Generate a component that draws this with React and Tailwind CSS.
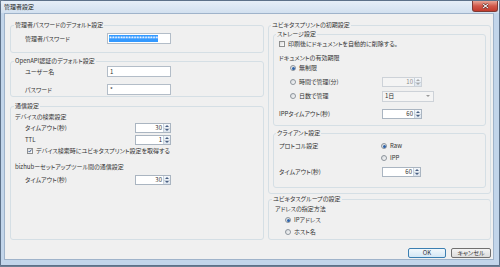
import React from 'react';

function Radio({ checked }) {
  return (
    <span className="flex h-[6px] w-[6px] shrink-0 items-center justify-center rounded-full border border-[#8d949c] bg-linear-to-br from-[#d4d8dc] to-[#fbfbfb]">
      {checked && <span className="h-[3px] w-[3px] rounded-full bg-[#2d62a8]" />}
    </span>
  );
}

function Check({ checked }) {
  return (
    <span className="flex h-[6px] w-[6px] shrink-0 items-center justify-center border border-[#8e8f8f] bg-linear-to-br from-[#dcdcdc] to-white">
      {checked && (
        <svg viewBox="0 0 6 6" className="h-[6px] w-[6px]">
          <path d="M0.8 3 L2.4 4.6 L5.2 0.8" stroke="#2b4d86" strokeWidth="1.3" fill="none" />
        </svg>
      )}
    </span>
  );
}

function Spin({ value, width, disabled }) {
  const arrow = disabled ? '#a9a9a9' : '#4a6184';
  return (
    <div
      className={`flex h-[10px] ${width} border ${
        disabled ? 'border-[#cdd2d8] bg-[#f4f4f4] text-[#8d8d8d]' : 'border-[#aab5c1] bg-white text-[#333]'
      }`}
    >
      <span className="flex-1 pr-[1px] text-right leading-[8px]">{value}</span>
      <span className="flex w-[7px] flex-col border-l border-[#c9d1da] bg-linear-to-b from-[#f4f7fa] to-[#dde5ee]">
        <span className="flex flex-1 items-center justify-center border-b border-[#c9d1da]">
          <svg viewBox="0 0 4 2" className="h-[2px] w-[4px]">
            <path d="M0 2 L2 0 L4 2Z" fill={arrow} />
          </svg>
        </span>
        <span className="flex flex-1 items-center justify-center">
          <svg viewBox="0 0 4 2" className="h-[2px] w-[4px]">
            <path d="M0 0 L2 2 L4 0Z" fill={arrow} />
          </svg>
        </span>
      </span>
    </div>
  );
}

function TextBox({ children }) {
  return (
    <div className="flex h-[11px] w-[64px] items-center border border-[#b3bdc8] bg-white pl-[2px]">
      {children}
    </div>
  );
}

export default function App() {
  return (
    <div className="h-[267px] w-[500px] bg-[#6d7f93] font-['Noto_Sans_CJK_JP',sans-serif] text-[6px] leading-[8px] text-[#333] [font-feature-settings:'palt']">
      <div className="flex h-[266px] w-[500px] flex-col rounded-t-[4px] border border-[#5d7189] bg-[#c2d5ea]">
        {/* title bar */}
        <div className="flex h-[12px] shrink-0 items-start justify-between bg-linear-to-b from-[#e6eef7] to-[#d2e0ef] pl-[3px] pr-[1px]">
          <span className="mt-[2px] text-[#222]">管理者設定</span>
          <div className="flex h-[11px] w-[26px] items-center justify-center rounded-b-[3px] border border-t-0 border-[#7e3a34] bg-linear-to-b from-[#e8a597] via-[#d0584a] to-[#c23a2c]">
            <svg viewBox="0 0 8 7" className="h-[6px] w-[7px]">
              <path d="M1 1 L7 6 M7 1 L1 6" stroke="#4a1a16" strokeWidth="2.4" />
              <path d="M1 1 L7 6 M7 1 L1 6" stroke="#fff" strokeWidth="1.3" />
            </svg>
          </div>
        </div>

        {/* client area */}
        <div className="ml-[3px] h-[247px] w-[490px] border border-[#9fb3ca] bg-[#f0f0f0] pl-[5px] pt-[7px]">
          <div className="flex gap-[4px]">
            {/* left column */}
            <div className="flex w-[254px] flex-col">
              <fieldset className="h-[32px] rounded-[3px] border border-[#d5dfe5] px-[3px]">
                <legend className="px-[1px] leading-[8px]">管理者パスワードのデフォルト設定</legend>
                <div className="ml-[11px] mt-[4px] flex h-[11px] items-center">
                  <span className="w-[82px]">管理者パスワード</span>
                  <div className="flex h-[11px] w-[64px] items-center border border-[#b3bdc8] bg-white pl-[1px]">
                    <span className="bg-[#3399ff] font-['Liberation_Sans',sans-serif] text-[7px] leading-[7px] text-white">
                      ******************
                    </span>
                  </div>
                </div>
              </fieldset>

              <fieldset className="mt-[4px] h-[40px] rounded-[3px] border border-[#d5dfe5] px-[3px]">
                <legend className="px-[1px] leading-[8px]">OpenAPI認証のデフォルト設定</legend>
                <div className="ml-[11px] mt-[1px] flex h-[11px] items-center">
                  <span className="w-[82px]">ユーザー名</span>
                  <TextBox>1</TextBox>
                </div>
                <div className="ml-[11px] mt-[7px] flex h-[11px] items-center">
                  <span className="w-[82px]">パスワード</span>
                  <TextBox>*</TextBox>
                </div>
              </fieldset>

              <fieldset className="mt-[5px] h-[138px] rounded-[3px] border border-[#d5dfe5] px-[3px]">
                <legend className="px-[1px] leading-[8px]">通信設定</legend>
                <div className="ml-[1px] mt-[3px]">デバイスの検索設定</div>
                <div className="ml-[11px] mt-[2px] flex h-[10px] items-center">
                  <span className="w-[110px]">タイムアウト(秒)</span>
                  <Spin value="30" width="w-[36px]" />
                </div>
                <div className="ml-[11px] mt-[2px] flex h-[10px] items-center">
                  <span className="w-[110px]">TTL</span>
                  <Spin value="1" width="w-[36px]" />
                </div>
                <div className="ml-[13px] mt-[2px] flex h-[8px] items-center gap-[3px]">
                  <Check checked />
                  <span>デバイス検索時にユビキタスプリント設定を取得する</span>
                </div>
                <div className="ml-[1px] mt-[8px]">bizhubーセットアップツール間の通信設定</div>
                <div className="ml-[11px] mt-[4px] flex h-[10px] items-center">
                  <span className="w-[110px]">タイムアウト(秒)</span>
                  <Spin value="30" width="w-[36px]" />
                </div>
              </fieldset>
            </div>

            {/* right column */}
            <div className="flex w-[223px] flex-col">
              <fieldset className="h-[173px] rounded-[3px] border border-[#d5dfe5] px-[4px]">
                <legend className="-ml-[2px] px-[1px] leading-[8px]">ユビキタスプリントの初期設定</legend>

                <fieldset className="mt-[1px] h-[96px] rounded-[3px] border border-[#d5dfe5] px-[2px]">
                  <legend className="px-[1px] leading-[8px]">ストレージ設定</legend>
                  <div className="ml-[3px] mt-[2px] flex h-[8px] items-center gap-[3px]">
                    <Check />
                    <span>印刷後にドキュメントを自動的に削除する。</span>
                  </div>
                  <div className="ml-[3px] mt-[6px]">ドキュメントの有効期限</div>
                  <div className="ml-[14px] mt-[1px] flex h-[10px] items-center">
                    <span className="flex w-[92px] items-center gap-[3px]">
                      <Radio checked />
                      無制限
                    </span>
                  </div>
                  <div className="ml-[14px] mt-[4px] flex h-[10px] items-center">
                    <span className="flex w-[92px] items-center gap-[3px]">
                      <Radio />
                      時間で管理(分)
                    </span>
                    <Spin value="10" width="w-[40px]" disabled />
                  </div>
                  <div className="ml-[14px] mt-[4px] flex h-[10px] items-center">
                    <span className="flex w-[92px] items-center gap-[3px]">
                      <Radio />
                      日数で管理
                    </span>
                    <div className="flex h-[11px] w-[52px] items-center justify-between border border-[#cdd2d8] bg-[#f4f4f4] pl-[2px] pr-[3px]">
                      <span>1日</span>
                      <svg viewBox="0 0 4 2" className="h-[2px] w-[4px]">
                        <path d="M0 0 L2 2 L4 0Z" fill="#9a9a9a" />
                      </svg>
                    </div>
                  </div>
                  <div className="ml-[3px] mt-[8px] flex h-[10px] items-center">
                    <span className="w-[103px]">IPPタイムアウト(秒)</span>
                    <Spin value="60" width="w-[40px]" />
                  </div>
                </fieldset>

                <fieldset className="mt-[3px] h-[59px] rounded-[3px] border border-[#d5dfe5] px-[2px]">
                  <legend className="px-[1px] leading-[8px]">クライアント設定</legend>
                  <div className="ml-[3px] mt-[4px] flex h-[10px] items-center">
                    <span className="w-[102px]">プロトコル設定</span>
                    <span className="flex items-center gap-[3px]">
                      <Radio checked />
                      Raw
                    </span>
                  </div>
                  <div className="ml-[3px] mt-[2px] flex h-[10px] items-center">
                    <span className="w-[102px]" />
                    <span className="flex items-center gap-[3px]">
                      <Radio />
                      IPP
                    </span>
                  </div>
                  <div className="ml-[3px] mt-[4px] flex h-[10px] items-center">
                    <span className="w-[103px]">タイムアウト(秒)</span>
                    <Spin value="60" width="w-[39px]" />
                  </div>
                </fieldset>
              </fieldset>

              <fieldset className="mt-[1px] h-[45px] rounded-[3px] border border-[#d5dfe5] px-[3px]">
                <legend className="px-[1px] leading-[8px]">ユビキタスグループの設定</legend>
                <div className="ml-[3px] mt-[2px]">アドレスの指定方法</div>
                <div className="ml-[13px] mt-[2px] flex h-[10px] items-center gap-[3px]">
                  <Radio checked />
                  <span>IPアドレス</span>
                </div>
                <div className="ml-[13px] mt-[2px] flex h-[10px] items-center gap-[3px]">
                  <Radio />
                  <span>ホスト名</span>
                </div>
              </fieldset>
            </div>
          </div>

          {/* buttons */}
          <div className="mt-[8px] flex w-[481px] justify-end gap-[5px]">
            <button className="flex h-[10px] w-[38px] items-center justify-center rounded-[2px] border border-[#3c7fb1] bg-linear-to-b from-[#f2f8fc] to-[#d4e7f5] leading-[8px]">
              OK
            </button>
            <button className="flex h-[10px] w-[40px] items-center justify-center rounded-[2px] border border-[#707070] bg-linear-to-b from-[#f4f4f4] to-[#dcdcdc] leading-[8px]">
              キャンセル
            </button>
          </div>
        </div>
      </div>
    </div>
  );
}
